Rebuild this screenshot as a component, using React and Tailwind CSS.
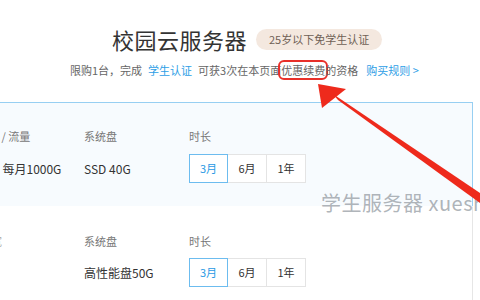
import React from 'react';

const font = { fontFamily: '"Noto Sans CJK SC", "Noto Sans", sans-serif' };

function Durations() {
  return (
    <div className="flex">
      <div className="w-[39px] h-[29px] flex items-center justify-center border border-[#6cbcef] bg-white text-[11px] text-[#2a9ae4] relative z-10">3月</div>
      <div className="w-[39px] h-[29px] flex items-center justify-center border border-l-0 border-[#e4e4e4] bg-white text-[11px] text-[#333]">6月</div>
      <div className="w-[39px] h-[29px] flex items-center justify-center border border-l-0 border-[#e4e4e4] bg-white text-[11px] text-[#333]">1年</div>
    </div>
  );
}

export default function App() {
  return (
    <div className="relative w-[480px] h-[300px] overflow-hidden bg-white" style={font}>
      {/* Header */}
      <div className="pt-[24px] pl-[112px] flex items-center gap-[9px]">
        <h1 className="text-[22px] leading-[30px] text-[#333] tracking-[0.5px]">校园云服务器</h1>
        <span className="h-[21px] px-[13px] flex items-center rounded-full bg-[#f4e8df] text-[11px] text-[#6f6055]">25岁以下免学生认证</span>
      </div>
      <p className="mt-[7px] pl-[70px] text-[11px] leading-[18px] text-[#666] whitespace-nowrap">
        限购1台，完成<span className="ml-[6px] mr-[6px] text-[#2d9ee6]">学生认证</span>可获3次在本页面
        <span className="inline-block leading-[14px] rounded-[3px] outline-2 outline-offset-[1px] outline-[#e8302a]">优惠续费</span>
        的资格<span className="ml-[8px] text-[#2d9ee6]">购买规则 &gt;</span>
      </p>

      {/* Card 1 */}
      <div className="mt-[23px] -ml-[40px] w-[513px] border border-[#97cff2] bg-[#f7fbfe] pt-[25px] pb-[23px] pl-[18px] flex">
        <div className="w-[105px]">
          <div className="-ml-[2px] text-[11px] leading-[17px] text-[#777] whitespace-nowrap">带宽 / 流量</div>
          <div className="mt-[9px] h-[29px] flex items-center -ml-[3px] text-[12px] text-[#333] whitespace-nowrap">1M / 每月1000G</div>
        </div>
        <div className="w-[105px]">
          <div className="text-[11px] leading-[17px] text-[#777]">系统盘</div>
          <div className="mt-[9px] h-[29px] flex items-center text-[12px] text-[#333]">SSD 40G</div>
        </div>
        <div>
          <div className="text-[11px] leading-[17px] text-[#777]">时长</div>
          <div className="mt-[9px]"><Durations /></div>
        </div>
      </div>

      {/* Card 2 */}
      <div className="-mt-px -ml-[40px] w-[513px] border border-[#e6e6e6] border-t-transparent bg-white pt-[26px] pb-[20px] pl-[18px] flex">
        <div className="w-[105px]">
          <div className="pl-[1px] text-[11px] leading-[17px] text-[#aaa]">带宽</div>
        </div>
        <div className="w-[105px]">
          <div className="text-[11px] leading-[17px] text-[#777]">系统盘</div>
          <div className="mt-[8px] h-[29px] flex items-center text-[12px] text-[#333]">高性能盘50G</div>
        </div>
        <div>
          <div className="text-[11px] leading-[17px] text-[#777]">时长</div>
          <div className="mt-[8px]"><Durations /></div>
        </div>
      </div>

      {/* Watermark */}
      <div className="absolute left-[321px] top-[189px] text-[20px] leading-[28px] text-[#9aa1a7]/80 whitespace-nowrap tracking-[0.5px]">
        学生服务器 xuesheng
      </div>

      {/* Arrow */}
      <svg className="absolute left-0 top-0 pointer-events-none" width="480" height="300" viewBox="0 0 480 300">
        <polygon points="318,84 322,108 346,89" fill="#ee2a1c" />
        <polygon points="333,94 338,100 480,203 480,193" fill="#ee2a1c" />
      </svg>
    </div>
  );
}
